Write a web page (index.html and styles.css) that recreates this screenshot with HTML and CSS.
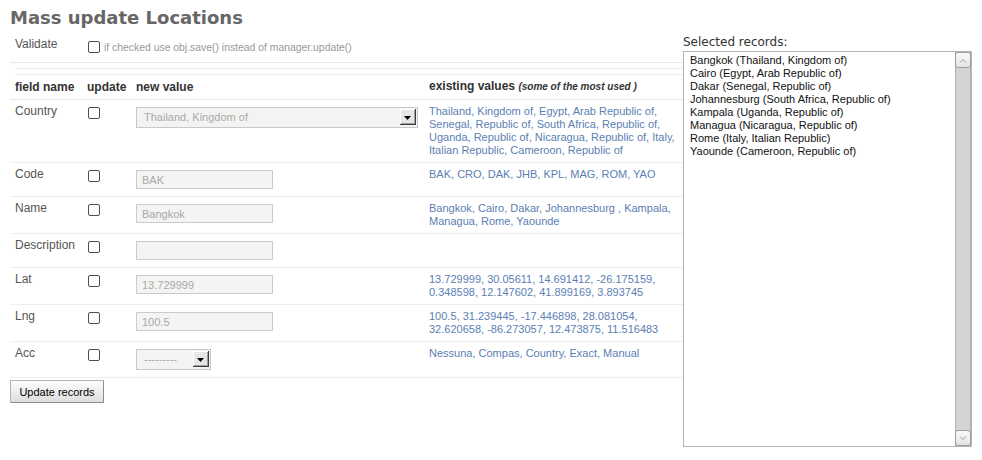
FILE: index.html
```html
<!DOCTYPE html>
<html>
<head>
<meta charset="utf-8">
<title>Mass update Locations</title>
<link rel="stylesheet" href="styles.css">
</head>
<body>
<div class="page">
  <div class="main">
    <h1 class="title">Mass update Locations</h1>
    <div class="validate-row">
      <span class="validate-label">Validate</span>
      <input type="checkbox" class="cb cb-validate">
      <span class="help">if checked use obj.save() instead of manager.update()</span>
    </div>
    <div class="spacer"></div>
    <div class="spacer"></div>
    <table class="fields">
      <colgroup>
        <col class="c-name"><col class="c-upd"><col class="c-new"><col class="c-exist">
      </colgroup>
      <thead>
        <tr><th>field name</th><th>update</th><th>new value</th><th>existing values <em class="note">(some of the most used )</em></th></tr>
      </thead>
      <tbody>
        <tr>
          <td class="label">Country</td>
          <td><input type="checkbox" class="cb"></td>
          <td><div class="select select-wide"><span class="select-text">Thailand, Kingdom of</span><span class="arrow"><svg width="7" height="4" viewBox="0 0 7 4"><polygon points="0,0 7,0 3.5,4" fill="#000"/></svg></span></div></td>
          <td class="values"><a>Thailand, Kingdom of</a>, <a>Egypt, Arab Republic of</a>, <a>Senegal, Republic of</a>, <a>South Africa, Republic of</a>, <a>Uganda, Republic of</a>, <a>Nicaragua, Republic of</a>, <a>Italy,</a> <a>Italian Republic</a>, <a>Cameroon, Republic of</a></td>
        </tr>
        <tr>
          <td class="label">Code</td>
          <td><input type="checkbox" class="cb"></td>
          <td><input type="text" class="text-input" value="BAK" readonly></td>
          <td class="values"><a>BAK</a>, <a>CRO</a>, <a>DAK</a>, <a>JHB</a>, <a>KPL</a>, <a>MAG</a>, <a>ROM</a>, <a>YAO</a></td>
        </tr>
        <tr>
          <td class="label">Name</td>
          <td><input type="checkbox" class="cb"></td>
          <td><input type="text" class="text-input" value="Bangkok" readonly></td>
          <td class="values"><a>Bangkok</a>, <a>Cairo</a>, <a>Dakar</a>, <a>Johannesburg </a>, <a>Kampala</a>, <a>Managua</a>, <a>Rome</a>, <a>Yaounde</a></td>
        </tr>
        <tr>
          <td class="label">Description</td>
          <td><input type="checkbox" class="cb"></td>
          <td><input type="text" class="text-input" value="" readonly></td>
          <td class="values"></td>
        </tr>
        <tr>
          <td class="label">Lat</td>
          <td><input type="checkbox" class="cb"></td>
          <td><input type="text" class="text-input" value="13.729999" readonly></td>
          <td class="values"><a>13.729999</a>, <a>30.05611</a>, <a>14.691412</a>, <a>-26.175159</a>, <a>0.348598</a>, <a>12.147602</a>, <a>41.899169</a>, <a>3.893745</a></td>
        </tr>
        <tr>
          <td class="label">Lng</td>
          <td><input type="checkbox" class="cb"></td>
          <td><input type="text" class="text-input" value="100.5" readonly></td>
          <td class="values"><a>100.5</a>, <a>31.239445</a>, <a>-17.446898</a>, <a>28.081054</a>, <a>32.620658</a>, <a>-86.273057</a>, <a>12.473875</a>, <a>11.516483</a></td>
        </tr>
        <tr>
          <td class="label">Acc</td>
          <td><input type="checkbox" class="cb"></td>
          <td><div class="select select-small"><span class="select-text">---------</span><span class="arrow"><svg width="7" height="4" viewBox="0 0 7 4"><polygon points="0,0 7,0 3.5,4" fill="#000"/></svg></span></div></td>
          <td class="values"><a>Nessuna</a>, <a>Compas</a>, <a>Country</a>, <a>Exact</a>, <a>Manual</a></td>
        </tr>
      </tbody>
    </table>
    <button type="button" class="btn">Update records</button>
  </div>
  <div class="side">
    <div class="side-label">Selected records:</div>
    <div class="listbox">
      <ul class="list">
        <li>Bangkok (Thailand, Kingdom of)</li>
        <li>Cairo (Egypt, Arab Republic of)</li>
        <li>Dakar (Senegal, Republic of)</li>
        <li>Johannesburg (South Africa, Republic of)</li>
        <li>Kampala (Uganda, Republic of)</li>
        <li>Managua (Nicaragua, Republic of)</li>
        <li>Rome (Italy, Italian Republic)</li>
        <li>Yaounde (Cameroon, Republic of)</li>
      </ul>
      <div class="scrollbar">
        <span class="sb-btn"><svg width="8" height="5" viewBox="0 0 8 5"><polyline points="1,4.5 4,1.5 7,4.5" fill="none" stroke="#9a9a9a" stroke-width="1"/></svg></span>
        <span class="sb-btn"><svg width="8" height="5" viewBox="0 0 8 5"><polyline points="1,0.5 4,3.5 7,0.5" fill="none" stroke="#9a9a9a" stroke-width="1"/></svg></span>
      </div>
    </div>
  </div>
</div>
</body>
</html>
```

FILE: styles.css
```css
html, body {
  margin: 0;
  padding: 0;
  background: #fff;
}
body {
  font-family: "Liberation Sans", Arial, sans-serif;
  font-size: 12px;
  color: #333;
}
.page {
  display: flex;
  align-items: flex-start;
  padding: 0 10px;
}
.main {
  width: 673px;
  flex: none;
}
.title {
  margin: 0;
  padding-top: 7px;
  font-family: "DejaVu Sans", sans-serif;
  font-size: 18px;
  line-height: 22px;
  font-weight: bold;
  color: #666;
}
.validate-row {
  display: flex;
  align-items: flex-start;
  height: 13px;
  padding: 9px 5px 11px 5px;
  border-bottom: 1px solid #e8e8e8;
  line-height: 13px;
}
.validate-label {
  width: 72px;
  flex: none;
  color: #555;
}
.cb {
  appearance: none;
  -webkit-appearance: none;
  display: block;
  box-sizing: border-box;
  width: 12px;
  height: 12px;
  margin: 2px 0 0 1px;
  border: 1px solid #4e4e4e;
  border-radius: 2px;
  background: #fff;
}
.cb-validate {
  margin-top: 3px;
}
.help {
  margin: 3px 0 0 4px;
  font-size: 10.4px;
  line-height: 13px;
  color: #999;
}
.spacer {
  height: 5px;
  margin-left: 5px;
  border-bottom: 1px solid #eee;
}
.fields {
  width: 673px;
  table-layout: fixed;
  border-collapse: collapse;
}
.c-name { width: 72px; }
.c-upd { width: 49px; }
.c-new { width: 293px; }
.c-exist { width: 259px; }
.fields th {
  padding: 4px 5px 5px 5px;
  text-align: left;
  font-size: 12px;
  line-height: 14px;
  font-weight: bold;
  color: #333;
  border-bottom: 1px solid #e6e6e6;
  white-space: nowrap;
}
.note {
  font-size: 10px;
  font-style: italic;
  font-weight: bold;
}
.fields td {
  padding: 5px;
  vertical-align: top;
  line-height: 13px;
  border-bottom: 1px solid #eee;
}
.label {
  font-size: 12px;
  color: #555;
}
.values {
  font-size: 11px;
  color: #5b80b2;
}
.values a {
  color: #5b80b2;
  text-decoration: none;
}
.text-input {
  display: block;
  box-sizing: border-box;
  width: 137px;
  height: 19px;
  margin: 2px 0;
  padding: 0 5px;
  border: 1px solid #cbcbcb;
  background: #f4f4f2;
  font-family: "Liberation Sans", Arial, sans-serif;
  font-size: 11px;
  color: #a8a8a8;
  outline: none;
}
.select {
  display: flex;
  align-items: flex-start;
  justify-content: space-between;
  box-sizing: border-box;
  height: 21px;
  margin: 2px 0;
  border: 1px solid #c8c8c8;
  background: #f3f3f1;
}
.select-wide { width: 282px; }
.select-small { width: 75px; }
.select-text {
  padding-left: 7px;
  font-size: 11px;
  line-height: 19px;
  color: #aaa;
  white-space: nowrap;
}
.arrow {
  display: flex;
  align-items: center;
  justify-content: center;
  box-sizing: border-box;
  width: 16px;
  height: 16px;
  margin: 1px 1px 0 0;
  background: #e6e6e6;
  box-shadow: inset -1px -1px 0 #3c3c3c, inset 1px 1px 0 #fff, inset -2px -2px 0 #a0a0a0;
}
.arrow svg {
  display: block;
  margin: 1px 1px 0 0;
}
.btn {
  display: block;
  box-sizing: border-box;
  width: 94px;
  height: 23px;
  margin-top: 2px;
  padding: 0;
  border: 1px solid #b4b4b4;
  border-right-color: #8c8c8c;
  border-bottom-color: #8c8c8c;
  border-radius: 1px;
  background: linear-gradient(#fdfdfd, #dedede);
  font-family: "Liberation Sans", Arial, sans-serif;
  font-size: 11px;
  color: #000;
}
.side {
  width: 289px;
  flex: none;
  padding-top: 35px;
}
.side-label {
  font-family: "DejaVu Sans", sans-serif;
  font-size: 12px;
  line-height: 14px;
  color: #333;
  margin-bottom: 2px;
}
.listbox {
  display: flex;
  box-sizing: border-box;
  height: 396px;
  border: 1px solid #b4b4b4;
  background: #fff;
}
.list {
  flex: 1;
  margin: 0;
  padding: 2px 0 0 6px;
  list-style: none;
  font-size: 11px;
  line-height: 13px;
  color: #111;
}
.scrollbar {
  display: flex;
  flex-direction: column;
  justify-content: space-between;
  width: 16px;
  background: #d4d4d4;
  box-shadow: inset 1px 0 0 #b0b0b0, inset -1px 0 0 #b0b0b0;
}
.sb-btn {
  display: flex;
  align-items: center;
  justify-content: center;
  box-sizing: border-box;
  width: 16px;
  height: 16px;
  border: 1px solid #9c9c9c;
  border-radius: 3px;
  background: linear-gradient(#fafafa, #e4e4e4);
}
```
